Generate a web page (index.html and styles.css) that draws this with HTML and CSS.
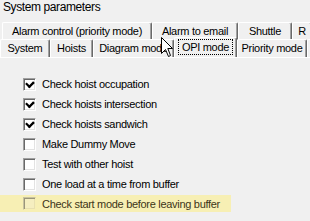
FILE: index.html
```html
<!DOCTYPE html>
<html lang="en">
<head>
    <meta charset="UTF-8">
    <title>System parameters</title>
    <link rel="stylesheet" href="styles.css">
</head>
<body>
    <div class="title">System parameters</div>

    <div class="tabs">
        <div class="tab-row row-back">
            <div class="tab w-alarm">Alarm control (priority mode)</div>
            <div class="tab w-email">Alarm to email</div>
            <div class="tab w-shuttle">Shuttle</div>
            <div class="tab w-rest">R</div>
        </div>
        <div class="tab-row row-front">
            <div class="tab w-system">System</div>
            <div class="tab w-hoists">Hoists</div>
            <div class="tab w-diagram">Diagram mode</div>
            <div class="tab active w-opi"><span class="focus">OPI mode</span></div>
            <div class="tab w-priority">Priority mode</div>
            <div class="tab w-last"></div>
        </div>
    </div>

    <div class="panel">
        <div class="option"><span class="box checked"></span>Check hoist occupation</div>
        <div class="option"><span class="box checked"></span>Check hoists intersection</div>
        <div class="option"><span class="box checked"></span>Check hoists sandwich</div>
        <div class="option"><span class="box"></span>Make Dummy Move</div>
        <div class="option"><span class="box"></span>Test with other hoist</div>
        <div class="option"><span class="box"></span>One load at a time from buffer</div>
        <div class="option hl"><span class="box dim"></span>Check start mode before leaving buffer</div>
    </div>

    <svg class="cursor" width="13" height="21" viewBox="0 0 13 21">
        <path d="M0.5 0.5 L0.5 16.5 L4.5 12.5 L7.5 19.5 L9.5 18.5 L6.8 11.5 L11.5 11.5 Z" fill="#fff" stroke="#000" stroke-width="1"/>
    </svg>
</body>
</html>
```

FILE: styles.css
```css
body {
    margin: 0;
    background: #f0f0f0;
    font-family: "Liberation Sans", Arial, sans-serif;
    font-size: 11px;
    letter-spacing: -0.3px;
    color: #000;
    width: 310px;
    height: 221px;
    overflow: hidden;
    position: relative;
}
.title {
    height: 14px;
    line-height: 14px;
    padding-left: 3px;
    font-size: 12px;
    letter-spacing: -0.4px;
    margin-bottom: 8px;
}
.tabs {
    height: 35px;
    width: 310px;
    overflow: hidden;
}
.tab-row {
    display: flex;
    height: 18px;
    white-space: nowrap;
}
.row-back {
    padding-left: 2px;
}
.row-front {
    margin-top: -1px;
    height: 20px;
    padding-top: 2px;
    margin-top: -3px;
}
.tab {
    box-sizing: border-box;
    height: 18px;
    line-height: 16px;
    text-align: center;
    overflow: hidden;
    flex: none;
    border-top: 1px solid #fff;
    border-left: 1px solid #fff;
    border-right: 1px solid #696969;
    box-shadow: inset -1px 0 #a0a0a0;
    border-radius: 2px 2px 0 0;
}
.tab.active {
    height: 20px;
    margin-top: -2px;
    line-height: 18px;
    position: relative;
    z-index: 1;
}
.focus {
    display: inline-block;
    line-height: 14px;
    padding: 0 3px;
    outline: 1px dotted #000;
}
.w-alarm { width: 150px; }
.w-email { width: 86px; }
.w-shuttle { width: 54px; }
.w-rest { width: 20px; }
.w-system { width: 50px; }
.w-hoists { width: 43px; }
.w-diagram { width: 81px; }
.w-opi { width: 63px; }
.w-priority { width: 70px; }
.w-last { width: 10px; }
.panel {
    box-sizing: border-box;
    border-top: 1px solid #fff;
    height: 164px;
    padding-top: 16px;
    overflow: hidden;
}
.option {
    display: flex;
    align-items: center;
    height: 20px;
    padding-left: 23px;
    white-space: nowrap;
}
.option.hl {
    box-sizing: border-box;
    height: 17px;
    margin: 1px 0 2px;
    width: 231px;
    background: #f7efb4;
    color: #3d3518;
}
.box {
    box-sizing: border-box;
    flex: none;
    width: 13px;
    height: 13px;
    margin-right: 6px;
    background: #fff;
    border-top: 1px solid #a0a0a0;
    border-left: 1px solid #a0a0a0;
    border-right: 1px solid #fff;
    border-bottom: 1px solid #fff;
    box-shadow: inset 1px 1px #696969, inset -1px -1px #e3e3e3;
    position: relative;
}
.box.checked::after {
    content: "";
    position: absolute;
    left: 2px;
    top: 1px;
    width: 5px;
    height: 3px;
    border-left: 2px solid #000;
    border-bottom: 2px solid #000;
    transform: translate(0.5px, 1px) rotate(-45deg) scale(1.1, 1.2);
}
.box.dim {
    background: #f5eec0;
    border-top-color: #c8c2a0;
    border-left-color: #c8c2a0;
    border-right-color: #f7efb4;
    border-bottom-color: #f7efb4;
    box-shadow: inset 1px 1px #9a957a, inset -1px -1px #e8e0b0;
}
.cursor {
    position: absolute;
    left: 161px;
    top: 37px;
    z-index: 5;
}
```
